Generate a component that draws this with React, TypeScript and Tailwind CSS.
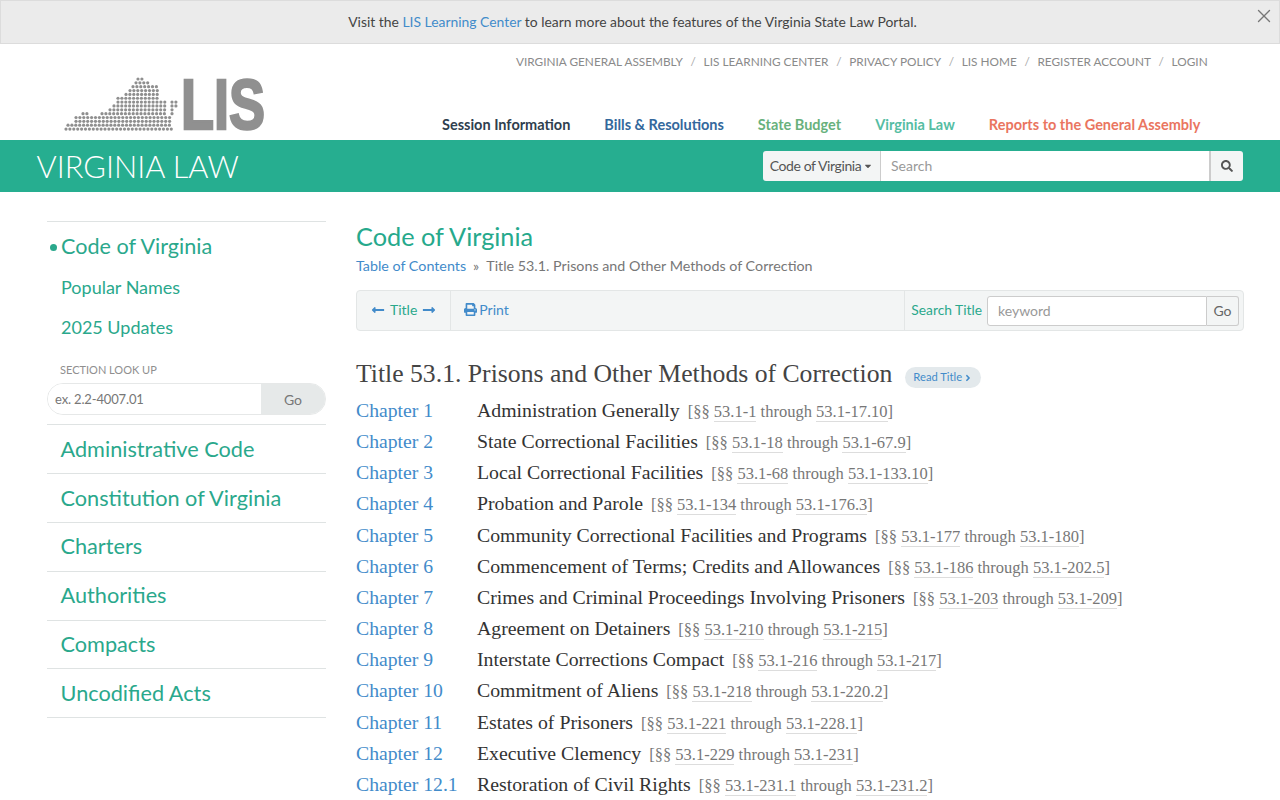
import React from 'react'
import { FaLongArrowAltLeft, FaLongArrowAltRight, FaPrint, FaSearch, FaCaretDown, FaAngleRight } from 'react-icons/fa'
import { X } from 'lucide-react'

const dotRows: [number, number][][] = [
  [[138, 144]],
  [[136, 148]],
  [[133, 158]],
  [[130, 158]],
  [[126, 158]],
  [[118, 158]],
  [[118, 167], [172, 178]],
  [[114, 167], [172, 178]],
  [[110, 167], [172, 175]],
  [[83, 90], [102, 167], [172, 175]],
  [[76, 170]],
  [[76, 170]],
  [[68, 172]],
  [[66, 175]],
]

function Logo() {
  const dots: React.ReactNode[] = []
  dotRows.forEach((row, r) => {
    row.forEach(([a, b]) => {
      for (let x = a; x <= b; x += 3.9) {
        dots.push(<circle key={`${r}-${x}`} cx={x - 60} cy={2 + r * 3.85} r={1.6} fill="#8f8f8f" />)
      }
    })
  })
  return (
    <svg width="240" height="100" viewBox="0 -24 240 100" className="block">
      {dots}
      <text x="121" y="52" fontFamily="'Liberation Sans', sans-serif" fontWeight="700" fontSize="71" fill="#909090" stroke="#909090" strokeWidth="2.5" textLength="84" lengthAdjust="spacingAndGlyphs">LIS</text>
    </svg>
  )
}

const utilLinks = ['VIRGINIA GENERAL ASSEMBLY', 'LIS LEARNING CENTER', 'PRIVACY POLICY', 'LIS HOME', 'REGISTER ACCOUNT', 'LOGIN']

const mainNav = [
  { label: 'Session Information', cls: 'text-[#2f3e4e]' },
  { label: 'Bills & Resolutions', cls: 'text-[#33689c]' },
  { label: 'State Budget', cls: 'text-[#68b17c]' },
  { label: 'Virginia Law', cls: 'text-[#55bda3]' },
  { label: 'Reports to the General Assembly', cls: 'text-[#ea7560]' },
]

const sideLower = ['Administrative Code', 'Constitution of Virginia', 'Charters', 'Authorities', 'Compacts', 'Uncodified Acts']

const chapters = [
  ['Chapter 1', 'Administration Generally', '53.1-1', '53.1-17.10'],
  ['Chapter 2', 'State Correctional Facilities', '53.1-18', '53.1-67.9'],
  ['Chapter 3', 'Local Correctional Facilities', '53.1-68', '53.1-133.10'],
  ['Chapter 4', 'Probation and Parole', '53.1-134', '53.1-176.3'],
  ['Chapter 5', 'Community Correctional Facilities and Programs', '53.1-177', '53.1-180'],
  ['Chapter 6', 'Commencement of Terms; Credits and Allowances', '53.1-186', '53.1-202.5'],
  ['Chapter 7', 'Crimes and Criminal Proceedings Involving Prisoners', '53.1-203', '53.1-209'],
  ['Chapter 8', 'Agreement on Detainers', '53.1-210', '53.1-215'],
  ['Chapter 9', 'Interstate Corrections Compact', '53.1-216', '53.1-217'],
  ['Chapter 10', 'Commitment of Aliens', '53.1-218', '53.1-220.2'],
  ['Chapter 11', 'Estates of Prisoners', '53.1-221', '53.1-228.1'],
  ['Chapter 12', 'Executive Clemency', '53.1-229', '53.1-231'],
  ['Chapter 12.1', 'Restoration of Civil Rights', '53.1-231.1', '53.1-231.2'],
]

function ChapterRow({ ch, title, from, to }: { ch: string; title: string; from: string; to: string }) {
  return (
    <div className="flex items-baseline h-[31.17px] whitespace-nowrap">
      <a className="w-[121px] shrink-0 text-[#428bca] text-[19.7px]">{ch}</a>
      <span className="text-[#333] text-[19.8px]">{title}</span>
      <span className="ml-[8px] text-[#777] text-[16.5px]">
        [§§ <a className="border-b border-[#ddd]">{from}</a> through <a className="border-b border-[#ddd]">{to}</a>]
      </span>
    </div>
  )
}

export default function App() {
  return (
    <div className="w-[1280px] h-[800px] overflow-hidden bg-white font-['Lato',sans-serif] text-[#444]">
      <div className="relative h-[44px] bg-[#ebebeb] border border-[#dcdcdc] flex items-center justify-center pr-[15px] text-[13.9px] text-[#444]">
        <span>Visit the <a className="text-[#428bca]">LIS Learning Center</a> to learn more about the features of the Virginia State Law Portal.</span>
        <X className="absolute right-[4px] top-[4px] text-[#777]" size={22} strokeWidth={1.5} />
      </div>

      <header className="h-[96px] flex">
        <div className="w-[424px] shrink-0 pl-[60px] pt-[9px]">
          <Logo />
        </div>
        <div className="flex-1 flex flex-col pl-[18px]">
          <div className="flex pl-[74px] pt-[11px] text-[11.8px] leading-[14px] text-[#8a8a8a] h-[72px]">
            {utilLinks.map((l, i) => (
              <span key={l} className="whitespace-nowrap">
                {i > 0 && <span className="mx-[7.7px] text-[#aaa]">/</span>}
                {l}
              </span>
            ))}
          </div>
          <nav className="flex gap-[34px] text-[14.5px] font-bold leading-[18px] whitespace-nowrap">
            {mainNav.map((n) => (
              <a key={n.label} className={n.cls}>{n.label}</a>
            ))}
          </nav>
        </div>
      </header>

      <div className="h-[52px] bg-[#26ae90] flex items-center justify-between pl-[36.5px] pr-[37px]">
        <div className="text-white text-[30.8px] font-light leading-none pt-[2px]">VIRGINIA LAW</div>
        <div className="flex h-[30px] w-[480px] rounded-[3px] overflow-hidden text-[14px] -mt-[1px]">
          <div className="w-[118px] bg-[#f3f5f5] border-r border-[#ccc] flex items-center justify-center text-[#555] tracking-[-0.4px]">
            Code of Virginia<FaCaretDown className="ml-[2px]" size={10} />
          </div>
          <div className="flex-1 bg-white flex items-center pl-[10px] text-[#999]">Search</div>
          <div className="w-[34px] bg-[#f3f5f5] border-l-2 border-[#ccc] flex items-center justify-center text-[#555]">
            <FaSearch size={12} />
          </div>
        </div>
      </div>

      <div className="flex pl-[47px] pt-[29px]">
        <aside className="w-[279px] shrink-0 text-[#2aa88c]">
          <div className="border-t border-[#dfe3e3] pl-[3px] pt-[12px]">
            <div className="flex items-center h-[26px] text-[21.6px] leading-none">
              <span className="w-[7px] h-[7px] rounded-full bg-[#2aa88c] mr-[4px]" />Code of Virginia
            </div>
            <div className="pl-[11px] text-[18px] leading-[26px] mt-[14px]">Popular Names</div>
            <div className="pl-[11px] text-[18px] leading-[26px] mt-[14px]">2025 Updates</div>
          </div>
          <div className="mt-[23px] pl-[13px] text-[11px] leading-[14px] text-[#8f8f8f]">SECTION LOOK UP</div>
          <div className="mt-[6px] flex h-[32px] rounded-full overflow-hidden border border-[#e6e8e8] text-[13px]">
            <div className="flex-1 bg-white flex items-center pl-[7px] pt-[1px] text-[#777] tracking-[-0.15px]">ex. 2.2-4007.01</div>
            <div className="w-[64px] bg-[#e6e9e9] flex items-center justify-center text-[#777] text-[14px]">Go</div>
          </div>
          <div className="mt-[9px] border-b border-[#dfe3e3]" />
          {sideLower.map((s) => (
            <div key={s} className="h-[48.9px] flex items-center pl-[13.5px] text-[21.7px] border-b border-[#dfe3e3]">{s}</div>
          ))}
        </aside>

        <main className="ml-[30px] w-[888px]">
          <h1 className="text-[#26a98c] text-[25.3px] leading-[32px] -mt-[1px]">Code of Virginia</h1>
          <div className="mt-[4px] text-[14.3px] leading-[20px] text-[#777]">
            <a className="text-[#428bca]">Table of Contents</a>
            <span className="mx-[7px]">»</span>
            Title 53.1. Prisons and Other Methods of Correction
          </div>

          <div className="mt-[14px] h-[41px] flex items-center bg-[#f3f5f5] border border-[#e3e6e6] rounded-[4px] text-[14px]">
            <div className="h-full flex items-center gap-[5px] px-[14px] pb-[2px] border-r border-[#e3e6e6]">
              <FaLongArrowAltLeft className="text-[#428bca]" size={14} />
              <span className="text-[#2aa88c]">Title</span>
              <FaLongArrowAltRight className="text-[#428bca]" size={14} />
            </div>
            <div className="flex items-center gap-[2px] pl-[13px] pb-[2px] text-[#428bca]">
              <FaPrint size={13} />Print
            </div>
            <div className="ml-auto h-full flex items-center border-l border-[#e3e6e6] pl-[6px] pr-[4px]">
              <span className="text-[#2aa88c] mr-[5px] text-[13.8px]">Search Title</span>
              <div className="w-[220px] h-[30px] bg-white border border-[#ccc] rounded-l-[3px] flex items-center pl-[10px] text-[#999]">keyword</div>
              <div className="w-[32px] h-[30px] bg-[#f3f5f5] border border-l-0 border-[#ccc] rounded-r-[3px] flex items-center justify-center text-[#666]">Go</div>
            </div>
          </div>

          <div className="font-['Liberation_Serif',serif]">
            <div className="mt-[26px] h-[34px] flex items-center">
              <h2 className="text-[25.7px] text-[#444] whitespace-nowrap">Title 53.1. Prisons and Other Methods of Correction</h2>
              <a className="ml-[13px] h-[21px] px-[8px] rounded-full bg-[#e3e9ec] text-[#428bca] text-[11.2px] font-['Lato',sans-serif] flex items-center mt-[7px]">
                Read Title<FaAngleRight className="ml-[1px]" size={10} />
              </a>
            </div>
            <div className="mt-[5px]">
              {chapters.map(([ch, title, from, to]) => (
                <ChapterRow key={ch} ch={ch} title={title} from={from} to={to} />
              ))}
            </div>
          </div>
        </main>
      </div>
    </div>
  )
}
